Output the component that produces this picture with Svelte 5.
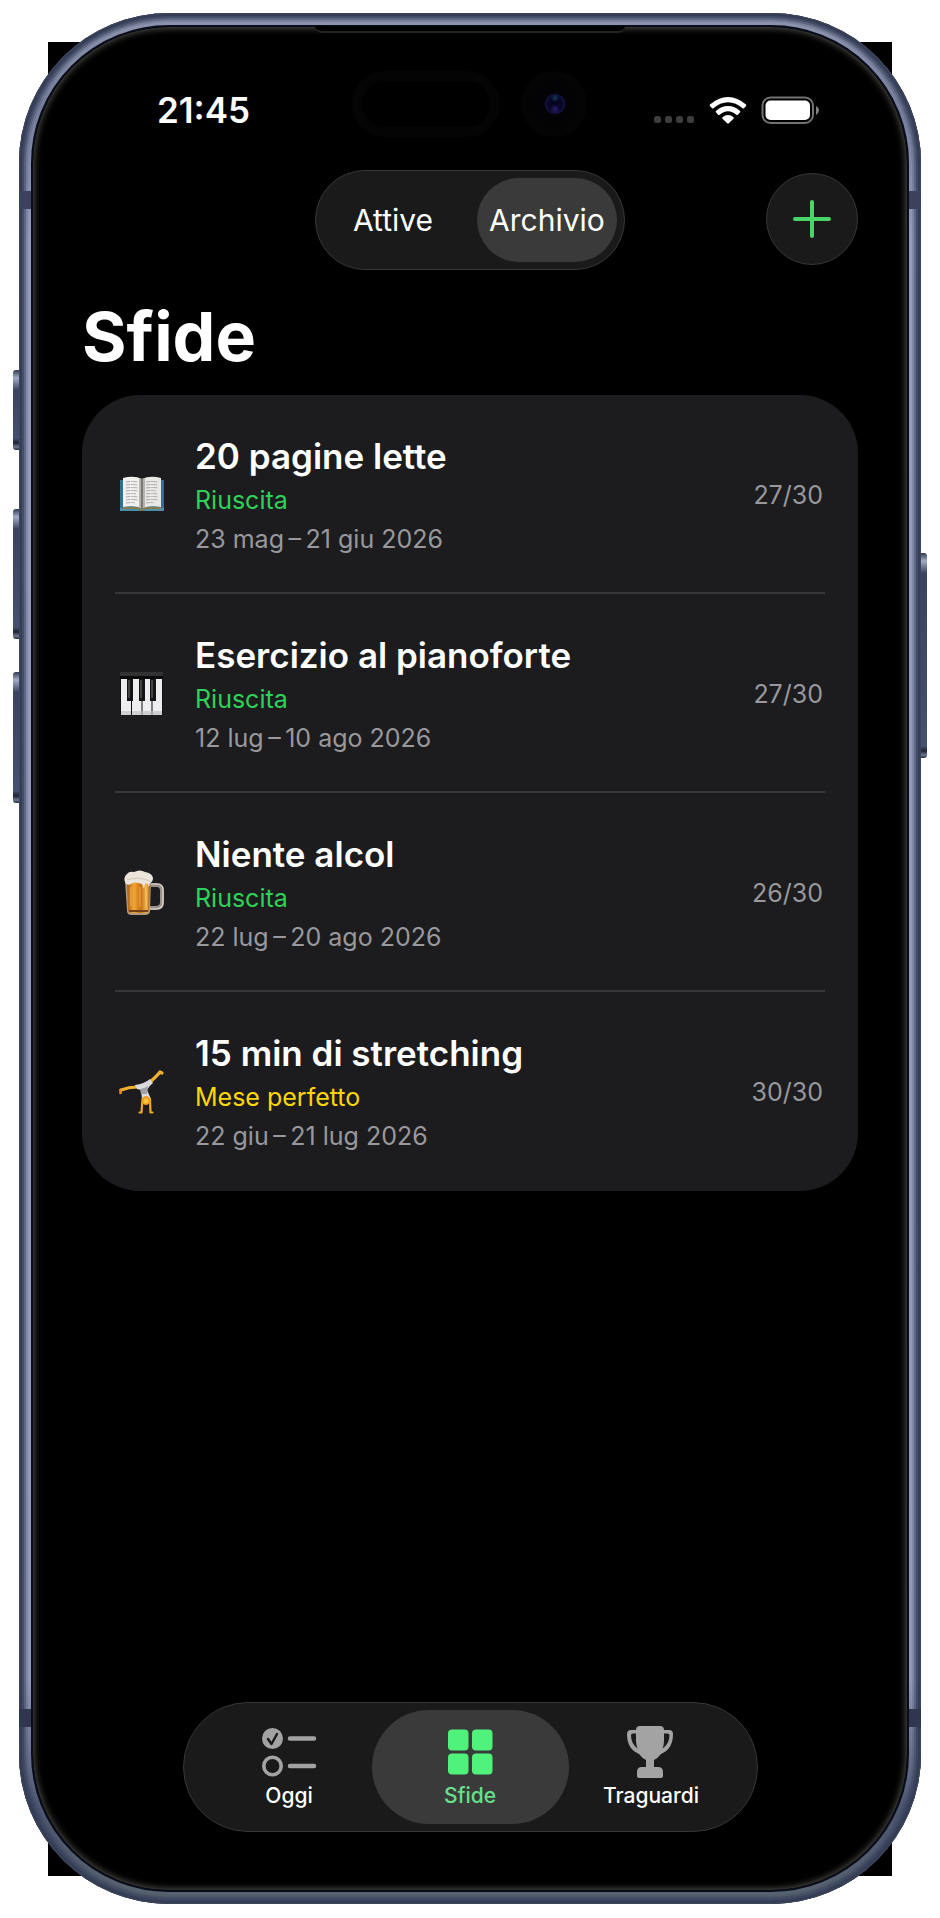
<script>
	let vista = $state('Archivio');
	let scheda = $state('Sfide');

	const viste = ['Attive', 'Archivio'];
	const schede = ['Oggi', 'Sfide', 'Traguardi'];

	const sfide = [
		{ icona: 'libro', nome: '20 pagine lette', esito: 'Riuscita', date: '23 mag\u2009–\u200921 giu 2026', giorni: '27/30' },
		{ icona: 'piano', nome: 'Esercizio al pianoforte', esito: 'Riuscita', date: '12 lug\u2009–\u200910 ago 2026', giorni: '27/30' },
		{ icona: 'birra', nome: 'Niente alcol', esito: 'Riuscita', date: '22 lug\u2009–\u200920 ago 2026', giorni: '26/30' },
		{ icona: 'ruota', nome: '15 min di stretching', esito: 'Mese perfetto', date: '22 giu\u2009–\u200921 lug 2026', giorni: '30/30' }
	];
</script>

{#snippet disegno(icona)}
	<svg class="disegno" viewBox="0 0 46 46" aria-hidden="true">
		{#if icona === 'libro'}
			<path d="M1 8h44v31H1z" fill="#2f6f8f" />
			<path d="M1 36h44v3H1z" fill="#4c91ac" />
			<path d="M4 35h17l2 3 2-3h17v2H26l-1 2h-4l-1-2H4z" fill="#8a7a4c" />
			<path d="M4 6Q15 3 23 7v29q-8-3-19-1z" fill="#f1f0ee" />
			<path d="M42 6Q31 3 23 7v29q8-3 19-1z" fill="#e9e8e6" />
			<path d="M20 6l3 1 3-1v29l-3 1-3-1z" fill="#b5b3b0" />
			<path d="M23 7v29" stroke="#55514d" stroke-width="1.2" />
			<path
				d="M7 10q6-1 12 0M7 13q6-1 11 0M7 16q6-1 12 0M7 19q6-1 12 0M7 22q6-1 10 0M7 25q6-1 12 0M7 28q6-1 12 0M7 31q6-1 9 0M27 10q6-1 12 0M27 13q6-1 11 0M27 16q6-1 12 0M27 19q6-1 10 0M27 22q6-1 12 0M27 25q6-1 12 0M27 28q6-1 12 0M27 31q6-1 8 0"
				fill="none"
				stroke="#a3a2a0"
				stroke-width="0.9"
				stroke-dasharray="4 0.7 2 0.5"
			/>
		{:else if icona === 'piano'}
			<path d="M1 1h43v4H1z" fill="#303234" />
			<path d="M1 5h43v3H1z" fill="#090909" />
			<path d="M1 8h43v36H1z" fill="#111" />
			<path d="M2 8h10v36H2zM13 8h9.500v36H13zM23.500 8h9v36h-9zM33.500 8h9.500v36h-9.500z" fill="#eeedef" />
			<path d="M2 40h10v4H2zM13 40h9.500v4H13zM23.500 40h9v4h-9zM33.500 40h9.500v4h-9.500z" fill="#cfced2" />
			<path d="M8 8h6v22H8zM20 8h6v22h-6zM31 8h6v22h-6z" fill="#151515" />
			<path d="M9 9h2v18H9zM21 9h2v18h-2zM32 9h2v18h-2z" fill="#444" />
		{:else if icona === 'birra'}
			<defs>
				<linearGradient id="malto">
					<stop offset="0" stop-color="#a9591a" />
					<stop offset=".3" stop-color="#f1a832" />
					<stop offset=".6" stop-color="#c96f16" />
					<stop offset=".85" stop-color="#f5b548" />
					<stop offset="1" stop-color="#9c5a20" />
				</linearGradient>
			</defs>
			<path d="M32 15h6q5 0 5 6v11q0 6-6 6h-6" fill="none" stroke="#99928a" stroke-width="4" />
			<path d="M32 14h6q6 0 6 6v12q0 7-7 7h-6" fill="none" stroke="#e1ddd6" stroke-width="1.2" />
			<path d="M6 10h26l-1 31q0 4-5 4H13q-5 0-5-4z" fill="#b09b80" />
			<path d="M8 12h23l-1 28q0 3-4 3H13q-4 0-4-3z" fill="url(#malto)" />
			<path d="M12 17v19M21 17v20M27 17v19" stroke="#ffd279" stroke-width="1" opacity=".6" />
			<path d="M10 41h19" stroke="#71421a" stroke-width="2" />
			<path d="M6 12Q4 7 8 4q2-3 7-2Q21-1 26 2q7 1 8 6 0 4-3 5l-1 4-2-4-2 1-1 5-2-5Q15 11 12 14q-5 2-6-2z" fill="#ece5db" />
			<path d="M8 10Q18 6 31 11" fill="none" stroke="#d3c8b8" />
		{:else}
			<path d="M2 21q8-3 16-3" fill="none" stroke="#f3b02c" stroke-width="3.200" stroke-linecap="round" />
			<path d="M1.500 21v3" stroke="#dd9422" stroke-width="2.600" stroke-linecap="round" />
			<path d="M31 13Q38 7 41 3l2 1" fill="none" stroke="#f3b02c" stroke-width="3.200" stroke-linecap="round" stroke-linejoin="round" />
			<path d="M16 16q9-1 15-6l3 4q-4 3-6 7l4 9h-9l-1-9-4-1z" fill="#dadade" />
			<path d="M21 20q4 0 8-3l-1 8h-6z" fill="#a0a2a8" />
			<path d="M23.500 30l-1 13.500h-2M31 30l.5 13.500h2" fill="none" stroke="#efaa2a" stroke-width="2.200" stroke-linecap="round" stroke-linejoin="round" />
			<ellipse cx="27" cy="31.500" rx="4" ry="4.500" fill="#ee9d1d" />
			<ellipse cx="27" cy="32" rx="2.400" ry="2.600" fill="#ffc437" />
		{/if}
	</svg>
{/snippet}

<div class="pagina">
	<div class="tasto azione"></div>
	<div class="tasto volume-su"></div>
	<div class="tasto volume-giu"></div>
	<div class="tasto accensione"></div>

	<div class="telefono">
		<div class="banda alta"></div>
		<div class="banda bassa"></div>

		<div class="schermo">
			<div class="altoparlante"></div>
			<div class="sensore"></div>
			<div class="fotocamera"></div>

			<div class="stato">
				<time>21:45</time>
				<svg class="spie" viewBox="0 0 166 30" aria-hidden="true">
					<g fill="#3d3d3d">
						<rect x="1" y="21" width="7" height="7" rx="2.500" />
						<rect x="12" y="21" width="7" height="7" rx="2.500" />
						<rect x="23" y="21" width="7" height="7" rx="2.500" />
						<rect x="34" y="21" width="7" height="7" rx="2.500" />
					</g>
					<g fill="#fff">
						<path d="M57 9.500Q65.500 2 75 2t18 7.500q.8.700 0 1.500l-2 2.200q-.7.700-1.500 0Q83 7.200 75 7.200t-14.500 6q-.8.700-1.500 0L57 11q-.8-.8 0-1.500z" />
						<path d="M63 16Q68 11 75 11t12 5q.8.800 0 1.500l-2.200 2.200q-.7.700-1.500 0Q79.500 16.200 75 16.200t-8.300 3.500q-.8.700-1.500 0L63 17.500q-.8-.7 0-1.500z" />
						<path d="M69.500 22.300Q72 20 75 20t5.500 2.300q.7.700 0 1.500l-4.700 4.400q-.8.700-1.600 0l-4.700-4.400q-.7-.8 0-1.500z" />
					</g>
					<rect x="109.500" y="2.500" width="50.500" height="25.500" rx="8" fill="none" stroke="#727272" stroke-width="2" />
					<rect x="112.500" y="5.500" width="44.500" height="19.500" rx="5" fill="#fff" />
					<path d="M163 11q3 1.500 3 4.200T163 20z" fill="#808080" />
				</svg>
			</div>

			<header>
				<div class="segmenti">
					{#each viste as v}
						<button class:scelto={vista === v} aria-pressed={vista === v} onclick={() => (vista = v)}>{v}</button>
					{/each}
				</div>
				<button class="aggiungi" aria-label="Aggiungi sfida">
					<svg viewBox="0 0 40 40"><path d="M20 3v34M3 20h34" stroke="#4bd568" stroke-width="4" stroke-linecap="round" /></svg>
				</button>
			</header>

			<h1>Sfide</h1>

			<ul class="elenco">
				{#each sfide as s}
					<li>
						{@render disegno(s.icona)}
						<div class="testo">
							<h2>{s.nome}</h2>
							<p class="esito" class:perfetto={s.esito === 'Mese perfetto'}>{s.esito}</p>
							<p class="date">{s.date}</p>
						</div>
						<span class="giorni">{s.giorni}</span>
					</li>
				{/each}
			</ul>

			<nav>
				{#each schede as nome}
					<button class:attiva={scheda === nome} onclick={() => (scheda = nome)}>
						<svg viewBox="0 0 60 60" aria-hidden="true">
							{#if nome === 'Oggi'}
								<circle cx="13.500" cy="16.500" r="10.500" fill="currentColor" />
								<path d="M9 17l3.500 5L18 12" fill="none" stroke="#1a1a1a" stroke-width="2.400" stroke-linecap="round" stroke-linejoin="round" />
								<circle cx="13.500" cy="44" r="8.700" fill="none" stroke="currentColor" stroke-width="3.600" />
								<path d="M31 16.500h24M31 44h24" stroke="currentColor" stroke-width="4.500" stroke-linecap="round" />
							{:else if nome === 'Sfide'}
								<g fill="currentColor">
									<rect x="8" y="7.500" width="20.500" height="21" rx="4" />
									<rect x="32" y="7.500" width="20.500" height="21" rx="4" />
									<rect x="8" y="31.500" width="20.500" height="21" rx="4" />
									<rect x="32" y="31.500" width="20.500" height="21" rx="4" />
								</g>
							{:else}
								<path
									d="M19 4h20q4 0 4 4h5q4 0 4 4 0 15-12 20-3 4-7 6v7h4q5 0 5 5v4q0 2-2 2H18q-2 0-2-2v-4q0-5 5-5h4v-7q-4-2-7-6Q6 27 6 12q0-4 4-4h5q0-4 4-4zM15 11.500h-3q-2 0-2 2 0 8 6.500 13-1.500-3-1.500-8zM43 11.500v7q0 5-1.500 8 7-5 7-13 0-2-2-2z"
									fill="currentColor"
									fill-rule="evenodd"
								/>
							{/if}
						</svg>
						<span>{nome}</span>
					</button>
				{/each}
			</nav>
		</div>
	</div>
</div>

<style>
	:global(body) {
		background: #fff;
	}

	.pagina {
		position: relative;
		display: flex;
		min-height: 100vh;
		box-sizing: border-box;
		padding: 13px 19px 14px;
		font-family: Inter, 'Liberation Sans', sans-serif;
		color: #fff;
	}

	/* sfondo dello schermo che sporge dietro gli angoli */
	.pagina::before {
		content: '';
		position: absolute;
		inset: 42px 48px;
		background: #000;
	}

	button {
		font: inherit;
		color: inherit;
		border: 0;
		padding: 0;
		background: none;
		cursor: pointer;
	}

	h1,
	h2,
	p,
	ul {
		margin: 0;
		padding: 0;
	}

	.telefono {
		position: relative;
		flex: 1;
		display: flex;
		padding: 12px;
		border-radius: 150px;
		background: linear-gradient(#8f95ae, #757d9a 5%, #949bbd 12%, #9199b8 88%, #4c546e 95%, #59646f);
		box-shadow:
			inset 0 0 0 1px #3f465a,
			inset 0 0 0 3px rgba(52, 60, 84, 0.9),
			inset 0 0 0 5px rgba(56, 64, 90, 0.65),
			inset 0 0 0 7px rgba(56, 64, 90, 0.45),
			inset 0 0 0 9px rgba(56, 64, 90, 0.2);
	}

	.banda {
		position: absolute;
		left: 0;
		right: 0;
		height: 18px;
		background: #3c415e;
	}

	.alta {
		top: 178px;
	}

	.bassa {
		bottom: 177px;
		background: #30364e;
	}

	.tasto {
		position: absolute;
		left: 13px;
		width: 10px;
		border-radius: 3px;
		background: linear-gradient(#303951, #a4adc8 8px, #3a435f 20px, #465070 calc(100% - 12px), #1d2436 calc(100% - 7px), #6f7891 calc(100% - 3px), #252c3e);
	}

	.azione {
		top: 370px;
		height: 80px;
	}

	.volume-su {
		top: 509px;
		height: 130px;
	}

	.volume-giu {
		top: 672px;
		height: 131px;
	}

	.accensione {
		left: auto;
		right: 13px;
		top: 553px;
		height: 205px;
	}

	.schermo {
		position: relative;
		flex: 1;
		display: flex;
		flex-direction: column;
		border: 2px solid #090d1b;
		border-radius: 138px;
		padding: 23px 49px 58px;
		background: #000;
		box-shadow: inset 0 0 7px 1px #54544e;
	}

	.altoparlante {
		position: absolute;
		top: -1px;
		left: 50%;
		width: 310px;
		height: 5px;
		margin-left: -155px;
		background: #000;
		border-bottom: 2px solid #232321;
		border-radius: 0 0 12px 12px;
	}

	.sensore {
		position: absolute;
		top: 44px;
		left: 50%;
		width: 128px;
		height: 46px;
		margin-left: -118px;
		border: 10px solid #040404;
		border-radius: 34px;
	}

	.fotocamera {
		position: absolute;
		top: 44px;
		left: 50%;
		width: 66px;
		height: 66px;
		margin-left: 51px;
		border-radius: 50%;
		background:
			radial-gradient(circle at 34px 27px, #123c55 0, transparent 4px),
			radial-gradient(circle at 34px 38px, #2c1a70 0, transparent 5px),
			radial-gradient(circle at 34px 33px, #03031c 0, #070624 7px, #151040 9px, #030306 11px, #040404 30px);
	}

	.stato {
		display: flex;
		align-items: center;
		justify-content: space-between;
		height: 120px;
		padding: 0 39px 0 75px;
	}

	.stato time {
		font-size: 35px;
		font-weight: 600;
	}

	.spie {
		width: 166px;
		height: 30px;
	}

	header {
		display: grid;
		grid-template-columns: 1fr auto 1fr;
		align-items: center;
	}

	.segmenti {
		grid-column: 2;
		display: flex;
		gap: 14px;
		padding: 7px;
		border: 1px solid #373737;
		border-radius: 50px;
		background: #1a1a1a;
	}

	.segmenti button {
		width: 140px;
		height: 84px;
		border-radius: 42px;
		font-size: 30px;
	}

	.segmenti .scelto {
		background: #3a3a3a;
	}

	.aggiungi {
		justify-self: end;
		display: grid;
		place-items: center;
		width: 92px;
		height: 92px;
		margin-bottom: 2px;
		border: 1px solid #373737;
		border-radius: 50%;
		background: #1a1a1a;
	}

	.aggiungi svg {
		width: 40px;
		height: 40px;
	}

	h1 {
		margin: 26px 0 19px;
		font-size: 68px;
		font-weight: 700;
		line-height: 80px;
	}

	.elenco {
		padding: 0 33px;
		border-radius: 58px;
		background: #1c1c1e;
		list-style: none;
	}

	li {
		display: flex;
		align-items: center;
		gap: 30px;
		padding: 36px 2px 33px 4px;
		border-bottom: 2px solid #38383a;
	}

	li:last-child {
		border-bottom-color: transparent;
	}

	.disegno {
		flex: none;
		width: 46px;
		height: 46px;
	}

	.testo {
		flex: 1;
	}

	h2 {
		font-size: 35px;
		font-weight: 600;
		line-height: 50px;
	}

	.esito,
	.date,
	.giorni {
		font-size: 25px;
		line-height: 39px;
		color: #98989d;
	}

	.esito {
		color: #30d158;
	}

	.perfetto {
		color: #ffd60a;
	}

	nav {
		display: flex;
		align-self: center;
		margin-top: auto;
		padding: 7px;
		border: 1px solid #373737;
		border-radius: 65px;
		background: #1a1a1a;
	}

	nav button {
		display: flex;
		flex-direction: column;
		align-items: center;
		width: 197px;
		height: 114px;
		padding-top: 12px;
		border-radius: 57px;
	}

	nav button + button {
		margin-left: -16px;
	}

	nav svg {
		width: 60px;
		height: 60px;
		color: #a3a3a3;
	}

	nav span {
		font-size: 21px;
		font-weight: 500;
		line-height: 28px;
	}

	nav .attiva {
		background: #3a3a3a;
		color: #66e08a;
	}

	nav .attiva svg {
		color: #4ff27a;
	}
</style>
